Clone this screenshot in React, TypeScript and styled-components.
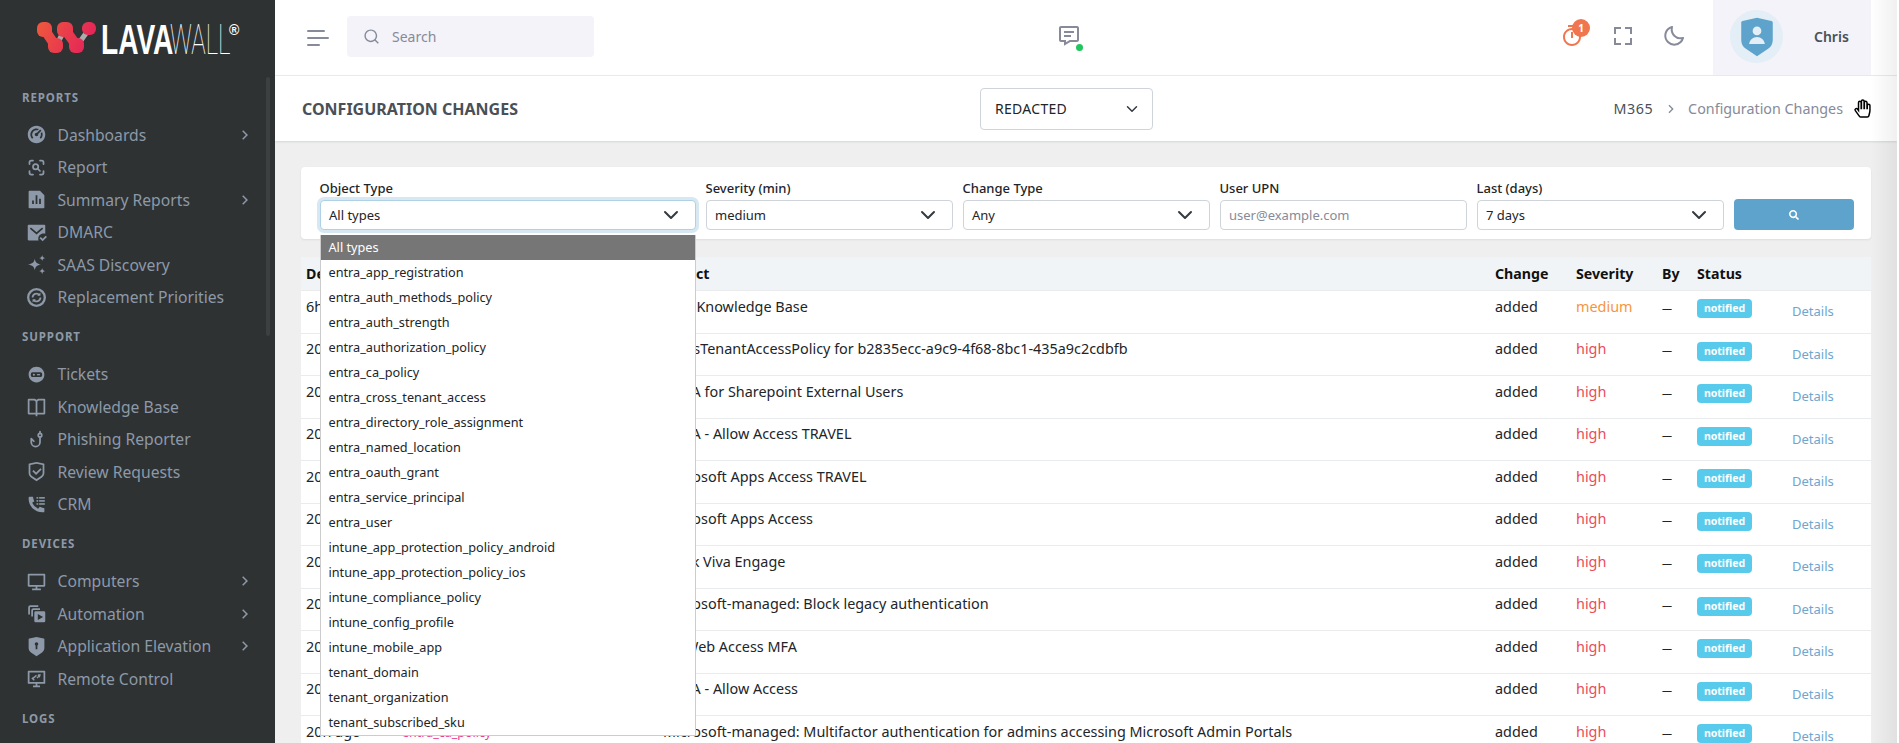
import React from 'react';
import styled, { createGlobalStyle } from 'styled-components';
import {
  RiArrowRightSLine,
  RiBookOpenLine,
  RiComputerLine,
  RiDashboard2Fill,
  RiFileChartFill,
  RiMailCheckFill,
  RiSearchLine,
  RiShieldCheckLine,
  RiShieldKeyholeFill,
  RiShieldUserFill,
  RiTimerLine,
} from 'react-icons/ri';
import { BiFullscreen, BiMessageDetail, BiMoon } from 'react-icons/bi';
import { FaHandPaper, FaSearch } from 'react-icons/fa';
import { TbFishHook, TbZoomScan } from 'react-icons/tb';

const FONT = `'Noto Sans', 'Open Sans', sans-serif`;

const GlobalStyle = createGlobalStyle`
  html, body {
    margin: 0;
    height: 100%;
    overflow: hidden;
    background: #fff;
    font-family: ${FONT};
  }
  * {
    box-sizing: border-box;
  }
`;

const Shell = styled.div`
  display: flex;
  width: 1899px;
  height: 743px;
  overflow: hidden;
  position: relative;
`;

/* sidebar */
const Sidebar = styled.aside`
  width: 275px;
  flex-shrink: 0;
  height: 100%;
  background: #2e3233;
  position: relative;
  overflow: hidden;
`;

const LogoBox = styled.div`
  height: 75px;
  padding: 20px 0 0 36px;
  svg {
    display: block;
  }
`;

const ScrollThumb = styled.div`
  position: absolute;
  left: 266px;
  top: 77px;
  width: 4px;
  height: 259px;
  border-radius: 2px;
  background: #3c4041;
`;

const NavGroup = styled.div`
  padding-top: 13.8px;
  & + & {
    padding-top: 14.75px;
  }
`;

const NavHeading = styled.div`
  height: 16px;
  line-height: 18px;
  margin: 0 0 13.75px 22px;
  font-size: 11.5px;
  font-weight: 700;
  letter-spacing: 0.9px;
  color: #8d99a8;
`;

const NavItem = styled.div`
  display: flex;
  align-items: center;
  height: 32.5px;
  padding-left: 26px;
  color: #8d99a8;
  font-size: 15.7px;
  svg.main {
    width: 21px;
    height: 21px;
    margin-right: 10.5px;
    flex-shrink: 0;
  }
  svg.chevron {
    width: 18px;
    height: 18px;
    position: absolute;
    left: 236px;
  }
`;

const NavLabel = styled.span`
  white-space: nowrap;
`;

/* main column */
const Main = styled.main`
  width: 1622px;
  height: 100%;
  background: #efefef;
  display: flex;
  flex-direction: column;
  overflow: hidden;
  position: relative;
`;

const EdgeShade = styled.div`
  position: absolute;
  top: 0;
  right: 0;
  bottom: 0;
  width: 26px;
  background: linear-gradient(to right, rgba(0, 0, 0, 0), rgba(0, 0, 0, 0.06));
  pointer-events: none;
`;

const TopBar = styled.header`
  height: 76px;
  flex-shrink: 0;
  background: #fff;
  border-bottom: 1px solid #e9ebec;
  display: flex;
  align-items: stretch;
  padding: 0 26px 0 32px;
`;

const Burger = styled.div`
  display: flex;
  flex-direction: column;
  justify-content: center;
  gap: 5px;
  width: 22px;
  margin-right: 18px;
  span {
    display: block;
    height: 2px;
    border-radius: 1px;
    background: #878a99;
  }
  span:nth-child(1) {
    width: 18px;
  }
  span:nth-child(2) {
    width: 22px;
  }
  span:nth-child(3) {
    width: 13px;
  }
`;

const SearchBox = styled.div`
  width: 247px;
  height: 41px;
  align-self: center;
  margin-top: -2px;
  background: #f3f3f9;
  border-radius: 4px;
  display: flex;
  align-items: center;
  padding-left: 16px;
  gap: 12px;
  color: #878a99;
  font-size: 14px;
  svg {
    width: 17px;
    height: 17px;
  }
`;

const ChatButton = styled.div`
  margin-left: 463px;
  align-self: center;
  margin-top: -4px;
  width: 22px;
  height: 24px;
  position: relative;
  color: #878a99;
  svg {
    width: 24px;
    height: 24px;
    display: block;
  }
`;

const OnlineDot = styled.span`
  position: absolute;
  right: -4px;
  bottom: -3px;
  width: 7px;
  height: 7px;
  border-radius: 50%;
  background: #22c55e;
`;

const TopActions = styled.div`
  margin-left: auto;
  display: flex;
  align-items: center;
`;

const TopIcon = styled.div<{ $orange?: boolean }>`
  width: 51px;
  height: 40px;
  display: flex;
  align-items: center;
  justify-content: center;
  position: relative;
  color: ${(p) => (p.$orange ? '#f0764f' : '#878a99')};
  margin-top: -4px;
  svg {
    width: 24px;
    height: 24px;
  }
`;

const CountBadge = styled.span`
  position: absolute;
  left: 26px;
  top: 3px;
  width: 18px;
  height: 18px;
  border-radius: 50%;
  background: #f0764f;
  color: #fff;
  font-size: 10px;
  font-weight: 700;
  display: flex;
  align-items: center;
  justify-content: center;
`;

const Profile = styled.div`
  width: 158px;
  margin-left: 14px;
  background: #f3f3f9;
  display: flex;
  align-items: center;
  padding: 0 0 2px 17px;
`;

const Avatar = styled.div`
  width: 53px;
  height: 53px;
  border-radius: 50%;
  background: #e3eef6;
  color: #5ea3cb;
  display: flex;
  align-items: center;
  justify-content: center;
  svg {
    width: 42px;
    height: 42px;
  }
`;

const ProfileName = styled.span`
  margin-left: 31px;
  font-size: 14px;
  font-weight: 600;
  color: #495057;
`;

const TitleBar = styled.div`
  height: 65px;
  flex-shrink: 0;
  background: #fff;
  box-shadow: 0 1px 2px rgba(56, 65, 74, 0.15);
  display: flex;
  align-items: center;
  padding: 0 54px 0 27px;
  position: relative;
`;

const PageTitle = styled.h1`
  width: 678px;
  margin: 0;
  font-size: 16px;
  font-weight: 700;
  color: #495057;
  white-space: nowrap;
`;

const TenantSelect = styled.div`
  width: 173px;
  height: 42px;
  border: 1px solid #ced4da;
  border-radius: 4px;
  display: flex;
  align-items: center;
  justify-content: space-between;
  padding: 0 14px;
  font-size: 14px;
  color: #212529;
  letter-spacing: 0.3px;
`;

const Crumbs = styled.div`
  margin-left: auto;
  display: flex;
  align-items: center;
  font-size: 14.3px;
  color: #495057;
  svg {
    width: 16px;
    height: 16px;
    margin: 0 9px 0 10px;
    color: #878a99;
  }
`;

const CrumbRoot = styled.span`
  letter-spacing: 0.5px;
`;

const CrumbCurrent = styled.span`
  color: #878a99;
`;

const HandCursor = styled.div`
  position: absolute;
  left: 1580px;
  top: 24px;
  color: #fff;
  line-height: 0;
  svg {
    width: 15px;
    height: 17px;
    stroke: #000;
    stroke-width: 45px;
    overflow: visible;
  }
`;

const Content = styled.div`
  padding: 26px 26px 0;
`;

const FilterCard = styled.section`
  height: 72px;
  background: #fff;
  border-radius: 4px;
  box-shadow: 0 1px 2px rgba(56, 65, 74, 0.1);
  padding: 11px 19px 0 18.5px;
  display: grid;
  grid-template-columns: 376.5px repeat(4, 247.5px) 120px;
  column-gap: 9.5px;
  align-items: end;
  align-content: start;
`;

const Field = styled.div`
  position: relative;
  display: flex;
  flex-direction: column;
`;

const FieldLabel = styled.label`
  height: 21.5px;
  line-height: 20px;
  font-size: 13px;
  font-weight: 500;
  color: #212529;
`;

const Control = styled.div<{ $focused?: boolean }>`
  height: 30.5px;
  background: #fff;
  border: 1px solid ${(p) => (p.$focused ? '#afd1e5' : '#ced4da')};
  border-radius: 4px;
  display: flex;
  align-items: center;
  justify-content: space-between;
  padding: 0 16px 0 8.5px;
  font-size: 13px;
  color: #212529;
  box-shadow: ${(p) => (p.$focused ? '0 0 0 3px rgba(94, 163, 203, 0.25)' : 'none')};
`;

const Placeholder = styled.span`
  color: #878a99;
`;

const SearchButton = styled.div`
  height: 31px;
  background: #5ea3cb;
  border-radius: 4px;
  color: #fff;
  display: flex;
  align-items: center;
  justify-content: center;
  svg {
    width: 10px;
    height: 10px;
  }
`;

const Dropdown = styled.ul`
  position: absolute;
  left: 0;
  top: 57px;
  width: 376.5px;
  margin: 0;
  padding: 0;
  list-style: none;
  background: #fff;
  border-left: 1px solid #ccc;
  border-right: 1px solid #ccc;
  border-bottom: 1px solid #ccc;
  z-index: 10;
`;

const DropdownItem = styled.li<{ $selected?: boolean }>`
  height: 25px;
  line-height: 25px;
  padding-left: 8px;
  font-size: 12.7px;
  white-space: nowrap;
  background: ${(p) => (p.$selected ? '#767676' : '#fff')};
  color: ${(p) => (p.$selected ? '#fff' : '#212529')};
`;

const TableCard = styled.section`
  margin-top: 18px;
  background: #fff;
  border-radius: 4px 4px 0 0;
`;

const COLUMNS = '96px 261px 832px 81px 86px 35px 95px 84px';

const HeadRow = styled.div`
  display: grid;
  grid-template-columns: ${COLUMNS};
  height: 34px;
  align-items: center;
  background: #f1f4f7;
  border-bottom: 1px solid #e9ebec;
  font-size: 14.2px;
  font-weight: 700;
  color: #111;
  span {
    padding-left: 5px;
  }
`;

const Row = styled.div`
  display: grid;
  grid-template-columns: ${COLUMNS};
  height: 42.5px;
  border-bottom: 1px solid #e9ebec;
  font-size: 14.4px;
  color: #212529;
  align-items: start;
`;

const Cell = styled.div`
  padding: 4.5px 0 0 5px;
  line-height: 22px;
  white-space: nowrap;
`;

const TypeCode = styled.code`
  font-family: ${FONT};
  font-size: 12.5px;
  color: #e83e8c;
`;

const SeverityText = styled.span<{ $level: string }>`
  color: ${(p) => (p.$level === 'medium' ? '#f7953e' : '#ea4c5c')};
`;

const ByDash = styled.span`
  font-size: 10px;
`;

const NotifiedBadge = styled.span`
  display: block;
  width: 55px;
  height: 19px;
  margin-top: 3.5px;
  line-height: 18px;
  border-radius: 4px;
  background: #58cbec;
  color: #fff;
  font-size: 10.5px;
  font-weight: 700;
  text-align: center;
`;

const DetailsLink = styled.a`
  display: block;
  padding-top: 4.5px;
  font-size: 13px;
  color: #6ea6d0;
`;

const TicketIcon = () => (
  <svg className='main' viewBox='0 0 24 24' fill='currentColor'>
    <path d='M12 3c5 0 9 3.800 9 9s-4 9-9 9-9-4-9-9 4-9 9-9zM7.500 9.500c-1.200 0-2 .9-2 2.200v1.100c0 1.200.8 2.100 2 2.100h9c1.200 0 2-.9 2-2.100v-1.100c0-1.300-.8-2.200-2-2.200z' fillRule='evenodd' />
    <circle cx='9' cy='12.200' r='1.200' />
    <rect x='12.500' y='11.500' width='3.500' height='1.400' />
  </svg>
);

const CrmIcon = () => (
  <svg className='main' viewBox='0 0 24 24' fill='currentColor'>
    <path d='M21 16.420v3.536a1 1 0 0 1-.93.998c-.437.03-.794.046-1.070.046-8.837 0-16-7.163-16-16 0-.276.015-.633.046-1.070A1 1 0 0 1 4.044 3H7.580a.5.5 0 0 1 .498.45c.023.23.044.413.064.552A13.901 13.901 0 0 0 9.350 8.003c.095.2.033.439-.147.567l-2.158 1.542a13.047 13.047 0 0 0 6.844 6.844l1.540-2.154a.462.462 0 0 1 .573-.149 13.901 13.901 0 0 0 4 1.205c.139.02.322.041.55.064a.5.5 0 0 1 .449.498z' />
    <rect x='12' y='3.500' width='2' height='1.800' />
    <rect x='15' y='3.500' width='6.500' height='1.800' />
    <rect x='12' y='7' width='2' height='1.800' />
    <rect x='15' y='7' width='6.500' height='1.800' />
    <rect x='12' y='10.500' width='2' height='1.800' />
    <rect x='15' y='10.500' width='6.500' height='1.800' />
  </svg>
);

const AutomationIcon = () => (
  <svg className='main' viewBox='0 0 24 24' fill='currentColor'>
    <path d='M2.500 13V5a2.500 2.500 0 0 1 2.500-2.500h9V4.500H5a.5.5 0 0 0-.5.5v8zM6 15.500V8.500A2.500 2.500 0 0 1 8.500 6H16v2H8.500a.5.5 0 0 0-.5.5v7z' />
    <path fillRule='evenodd' d='M11 9.500h9.500a1.500 1.500 0 0 1 1.500 1.500v9.500a1.500 1.500 0 0 1-1.500 1.500H11a1.500 1.500 0 0 1-1.500-1.500V11A1.500 1.500 0 0 1 11 9.500zM13.500 12.500v7l6-3.500z' />
  </svg>
);

const RemoteIcon = () => (
  <svg className='main' viewBox='0 0 24 24' fill='currentColor'>
    <path fillRule='evenodd' d='M3 3h18a1 1 0 0 1 1 1v13a1 1 0 0 1-1 1h-8v2h3v2H8v-2h3v-2H3a1 1 0 0 1-1-1V4a1 1 0 0 1 1-1zm1 2v11h16V5z' />
    <path d='M9 9.500l-3 2.500 3 2.500 1-1.200-1.200-1 3.700-3.300-1-1.200-3.500 3zM14 7l-1 1.200 1 .8-2 1.800 1 1.200 2-1.800.8 1 1.200-4.200z' />
  </svg>
);

const RefreshRingIcon = () => (
  <svg className='main' viewBox='0 0 24 24' fill='none' stroke='currentColor'>
    <circle cx='12' cy='12' r='9.500' strokeWidth='2.600' />
    <path d='M7.500 12a4.500 4.500 0 0 1 7.800-3M16.500 12a4.500 4.500 0 0 1-7.800 3' strokeWidth='2' />
    <path d='M16.500 6.300v3.700h-3.700zM7.500 17.700V14h3.700z' fill='currentColor' stroke='none' />
  </svg>
);

const SparkIcon = () => (
  <svg className='main' viewBox='0 0 24 24' fill='currentColor'>
    <path d='M10 5.500c.7 4 2.500 5.800 7 6.500-4.500.7-6.300 2.500-7 6.500-.7-4-2.500-5.800-8-6.500 5.500-.7 7.300-2.500 8-6.500z' />
    <path d='M18.500 1c.3 2 1.200 3 3.500 3.500-2.300.5-3.200 1.500-3.500 3.500-.3-2-1.200-3-3.500-3.500 2.300-.5 3.200-1.500 3.500-3.500z' />
    <path d='M18.500 16c.3 2 1.200 3 3.500 3.500-2.300.5-3.200 1.500-3.500 3.500-.3-2-1.200-3-3.500-3.500 2.300-.5 3.200-1.500 3.500-3.500z' />
  </svg>
);

const Logo = () => (
  <svg width='210' height='38' viewBox='0 0 210 38'>
    <defs>
      <linearGradient id='lava' gradientUnits='userSpaceOnUse' x1='0' y1='2' x2='60' y2='34'>
        <stop offset='0' stopColor='#ef5a3c' />
        <stop offset='1' stopColor='#e31b5e' />
      </linearGradient>
    </defs>
    <path d='M20 26 L29 9 M41 26 L53 9' stroke='#a9abad' strokeWidth='5' fill='none' />
    <path d='M8.500 9.500 L19.500 26 M29 9.500 L41 26' stroke='url(#lava)' strokeWidth='10' fill='none' />
    <g fill='url(#lava)'>
      <rect x='1' y='2' width='15' height='15' rx='6' />
      <rect x='12' y='18' width='15' height='15' rx='6' />
      <rect x='21' y='2' width='16' height='15' rx='6' />
      <rect x='33' y='18' width='15' height='15' rx='6' />
      <rect x='46' y='2' width='14' height='13' rx='6' />
    </g>
    <g fontSize='43' fill='#fff'>
      <text transform='translate(65 34) scale(0.655 1)' fontFamily='Liberation Sans, sans-serif' fontWeight='700'>LAVA</text>
      <text transform='translate(134 34) scale(0.56 1)' fontFamily='Roboto, sans-serif' fontWeight='100'>WALL</text>
    </g>
    <text x='193' y='15' fontFamily='Liberation Sans, sans-serif' fontSize='14' fontWeight='700' fill='#fff'>®</text>
  </svg>
);

type NavEntry = { label: string; icon: React.ReactNode; more?: boolean };

const NAV: { title: string; items: NavEntry[] }[] = [
  {
    title: 'REPORTS',
    items: [
      { label: 'Dashboards', icon: <RiDashboard2Fill className='main' />, more: true },
      { label: 'Report', icon: <TbZoomScan className='main' /> },
      { label: 'Summary Reports', icon: <RiFileChartFill className='main' />, more: true },
      { label: 'DMARC', icon: <RiMailCheckFill className='main' /> },
      { label: 'SAAS Discovery', icon: <SparkIcon /> },
      { label: 'Replacement Priorities', icon: <RefreshRingIcon /> },
    ],
  },
  {
    title: 'SUPPORT',
    items: [
      { label: 'Tickets', icon: <TicketIcon /> },
      { label: 'Knowledge Base', icon: <RiBookOpenLine className='main' /> },
      { label: 'Phishing Reporter', icon: <TbFishHook className='main' /> },
      { label: 'Review Requests', icon: <RiShieldCheckLine className='main' /> },
      { label: 'CRM', icon: <CrmIcon /> },
    ],
  },
  {
    title: 'DEVICES',
    items: [
      { label: 'Computers', icon: <RiComputerLine className='main' />, more: true },
      { label: 'Automation', icon: <AutomationIcon />, more: true },
      { label: 'Application Elevation', icon: <RiShieldKeyholeFill className='main' />, more: true },
      { label: 'Remote Control', icon: <RemoteIcon /> },
    ],
  },
  { title: 'LOGS', items: [] },
];

const OBJECT_TYPES = [
  'entra_app_registration',
  'entra_auth_methods_policy',
  'entra_auth_strength',
  'entra_authorization_policy',
  'entra_ca_policy',
  'entra_cross_tenant_access',
  'entra_directory_role_assignment',
  'entra_named_location',
  'entra_oauth_grant',
  'entra_service_principal',
  'entra_user',
  'intune_app_protection_policy_android',
  'intune_app_protection_policy_ios',
  'intune_compliance_policy',
  'intune_config_profile',
  'intune_mobile_app',
  'tenant_domain',
  'tenant_organization',
  'tenant_subscribed_sku',
];

const ROWS = [
  { when: '6h ago', type: 'entra_named_location', object: 'MSP Knowledge Base', severity: 'medium' },
  { when: '20h ago', type: 'entra_cross_tenant_access', object: 'CrossTenantAccessPolicy for b2835ecc-a9c9-4f68-8bc1-435a9c2cdbfb', severity: 'high' },
  { when: '20h ago', type: 'entra_ca_policy', object: '- MFA for Sharepoint External Users', severity: 'high' },
  { when: '20h ago', type: 'entra_ca_policy', object: '- MFA - Allow Access TRAVEL', severity: 'high' },
  { when: '20h ago', type: 'entra_ca_policy', object: 'Microsoft Apps Access TRAVEL', severity: 'high' },
  { when: '20h ago', type: 'entra_ca_policy', object: 'Microsoft Apps Access', severity: 'high' },
  { when: '20h ago', type: 'entra_ca_policy', object: 'Block Viva Engage', severity: 'high' },
  { when: '20h ago', type: 'entra_ca_policy', object: 'Microsoft-managed: Block legacy authentication', severity: 'high' },
  { when: '20h ago', type: 'entra_ca_policy', object: 'CA Web Access MFA', severity: 'high' },
  { when: '20h ago', type: 'entra_ca_policy', object: '- MFA - Allow Access', severity: 'high' },
  { when: '20h ago', type: 'entra_ca_policy', object: 'Microsoft-managed: Multifactor authentication for admins accessing Microsoft Admin Portals', severity: 'high' },
];

const Chevron = ({ size = 16 }: { size?: number }) => (
  <svg width={size} height={size} viewBox='0 0 16 16' fill='none' stroke='#343a40' strokeWidth='2' strokeLinecap='round' strokeLinejoin='round'>
    <path d='m2 5 6 6 6-6' />
  </svg>
);

const App: React.FC = () => {
  return (
    <Shell>
      <GlobalStyle />
      <Sidebar>
        <LogoBox>
          <Logo />
        </LogoBox>
        {NAV.map((group) => (
          <NavGroup key={group.title}>
            <NavHeading>{group.title}</NavHeading>
            {group.items.map((item) => (
              <NavItem key={item.label}>
                {item.icon}
                <NavLabel>{item.label}</NavLabel>
                {item.more && <RiArrowRightSLine className='chevron' />}
              </NavItem>
            ))}
          </NavGroup>
        ))}
        <ScrollThumb />
      </Sidebar>
      <Main>
        <TopBar>
          <Burger>
            <span />
            <span />
            <span />
          </Burger>
          <SearchBox>
            <RiSearchLine />
            Search
          </SearchBox>
          <ChatButton>
            <BiMessageDetail />
            <OnlineDot />
          </ChatButton>
          <TopActions>
            <TopIcon $orange>
              <RiTimerLine />
              <CountBadge>1</CountBadge>
            </TopIcon>
            <TopIcon>
              <BiFullscreen />
            </TopIcon>
            <TopIcon>
              <BiMoon />
            </TopIcon>
          </TopActions>
          <Profile>
            <Avatar>
              <RiShieldUserFill />
            </Avatar>
            <ProfileName>Chris</ProfileName>
          </Profile>
        </TopBar>
        <TitleBar>
          <PageTitle>CONFIGURATION CHANGES</PageTitle>
          <TenantSelect>
            REDACTED
            <Chevron size={12} />
          </TenantSelect>
          <Crumbs>
            <CrumbRoot>M365</CrumbRoot>
            <RiArrowRightSLine />
            <CrumbCurrent>Configuration Changes</CrumbCurrent>
          </Crumbs>
          <HandCursor>
            <FaHandPaper />
          </HandCursor>
        </TitleBar>
        <Content>
          <FilterCard>
            <Field>
              <FieldLabel>Object Type</FieldLabel>
              <Control $focused>
                All types
                <Chevron />
              </Control>
              <Dropdown>
                <DropdownItem $selected>All types</DropdownItem>
                {OBJECT_TYPES.map((t) => (
                  <DropdownItem key={t}>{t}</DropdownItem>
                ))}
              </Dropdown>
            </Field>
            <Field>
              <FieldLabel>Severity (min)</FieldLabel>
              <Control>
                medium
                <Chevron />
              </Control>
            </Field>
            <Field>
              <FieldLabel>Change Type</FieldLabel>
              <Control>
                Any
                <Chevron />
              </Control>
            </Field>
            <Field>
              <FieldLabel>User UPN</FieldLabel>
              <Control>
                <Placeholder>user@example.com</Placeholder>
              </Control>
            </Field>
            <Field>
              <FieldLabel>Last (days)</FieldLabel>
              <Control>
                7 days
                <Chevron />
              </Control>
            </Field>
            <SearchButton>
              <FaSearch />
            </SearchButton>
          </FilterCard>
          <TableCard>
            <HeadRow>
              <span>Detected</span>
              <span>Type</span>
              <span>Object</span>
              <span>Change</span>
              <span>Severity</span>
              <span>By</span>
              <span>Status</span>
              <span />
            </HeadRow>
            {ROWS.map((row, i) => (
              <Row key={i}>
                <Cell>{row.when}</Cell>
                <Cell>
                  <TypeCode>{row.type}</TypeCode>
                </Cell>
                <Cell>{row.object}</Cell>
                <Cell>added</Cell>
                <Cell>
                  <SeverityText $level={row.severity}>{row.severity}</SeverityText>
                </Cell>
                <Cell>
                  <ByDash>—</ByDash>
                </Cell>
                <Cell>
                  <NotifiedBadge>notified</NotifiedBadge>
                </Cell>
                <Cell>
                  <DetailsLink>Details</DetailsLink>
                </Cell>
              </Row>
            ))}
          </TableCard>
        </Content>
        <EdgeShade />
      </Main>
    </Shell>
  );
};

export default App;
